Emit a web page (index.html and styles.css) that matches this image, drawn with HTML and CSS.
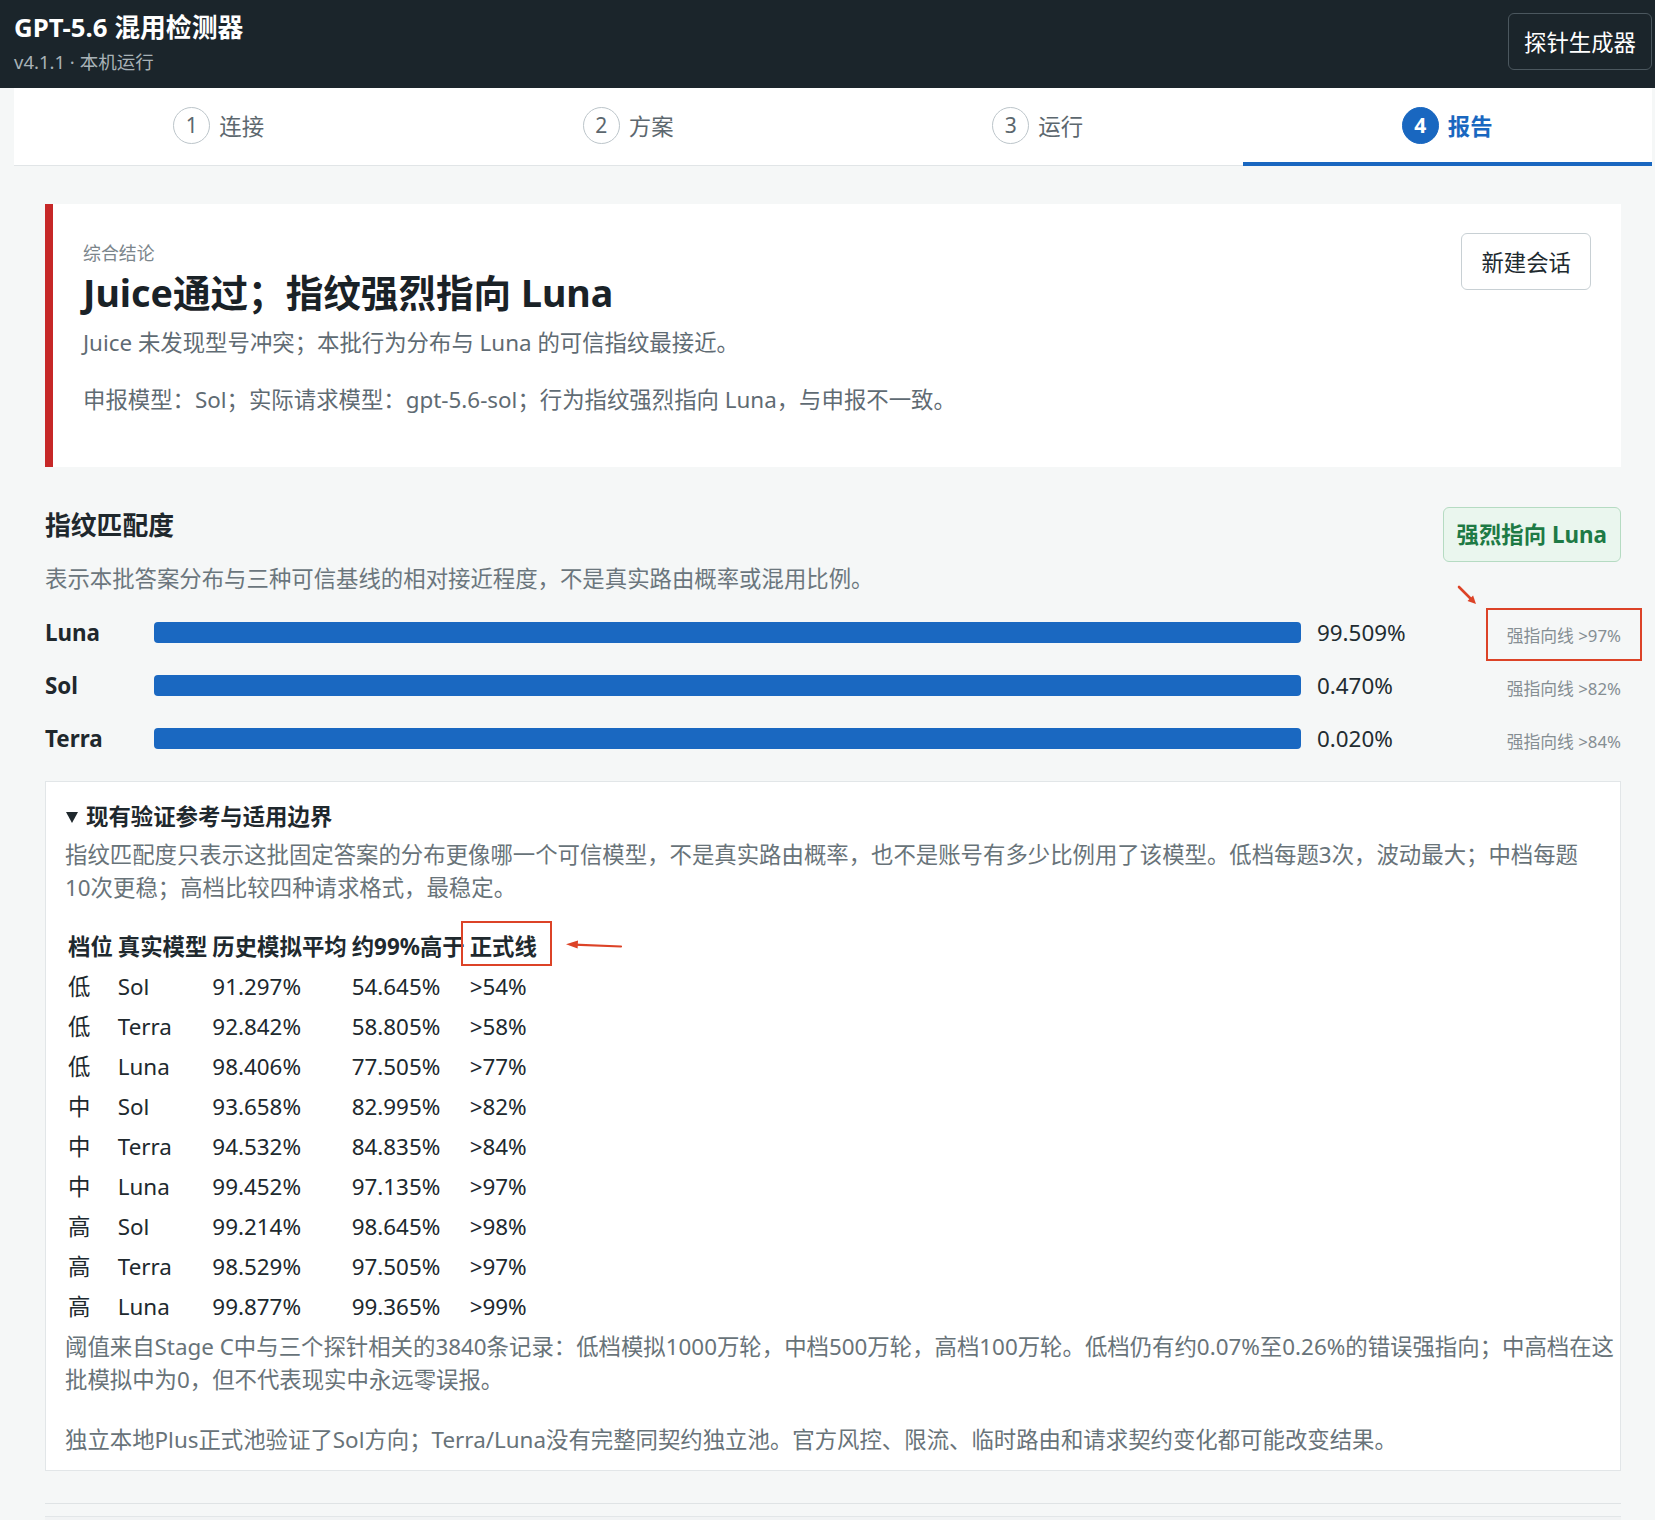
FILE: index.html
```html
<!DOCTYPE html>
<html lang="zh-CN">
<head>
  <meta charset="UTF-8" />
  <meta name="viewport" content="width=device-width, initial-scale=1.0"/>
  <title>GPT-5.6 混用检测器</title>
  <link rel="stylesheet" href="styles.css">
</head>
<body>

  <header class="topbar">
    <div class="brand">
      <div class="brand-title">GPT-5.6 混用检测器</div>
      <div class="brand-sub">v4.1.1 · 本机运行</div>
    </div>
    <button class="probe-btn">探针生成器</button>
  </header>

  <nav class="steps">
    <div class="step"><span class="step-num">1</span>连接</div>
    <div class="step"><span class="step-num">2</span>方案</div>
    <div class="step"><span class="step-num">3</span>运行</div>
    <div class="step active"><span class="step-num">4</span>报告</div>
  </nav>

  <main class="report">
    <section class="verdict">
      <div class="verdict-body">
        <div class="verdict-label">综合结论</div>
        <h1>Juice通过；指纹强烈指向 Luna</h1>
        <p>Juice 未发现型号冲突；本批行为分布与 Luna 的可信指纹最接近。</p>
        <p>申报模型：Sol；实际请求模型：gpt-5.6-sol；行为指纹强烈指向 Luna，与申报不一致。</p>
      </div>
      <button class="new-btn">新建会话</button>
    </section>

    <section class="match">
      <div class="match-head">
        <div>
          <h2>指纹匹配度</h2>
          <p class="match-desc">表示本批答案分布与三种可信基线的相对接近程度，不是真实路由概率或混用比例。</p>
        </div>
        <span class="badge">强烈指向 Luna</span>
      </div>

      <div class="bars">
        <div class="bar-row">
          <span class="bar-name">Luna</span>
          <div class="bar"></div>
          <span class="bar-val">99.509%</span>
          <span class="bar-line">
            <span class="mark">强指向线 &gt;97%
              <i class="anno-box anno-box-line"></i>
              <svg class="anno-arrow anno-arrow-diag" width="24" height="24" viewBox="0 0 24 24">
                <line x1="4" y1="4" x2="16" y2="16" stroke="#dc4327" stroke-width="2.6" stroke-linecap="round"/>
                <polygon points="21,21 18.1,12.5 12.5,18.1" fill="#dc4327"/>
              </svg>
            </span>
          </span>
        </div>
        <div class="bar-row">
          <span class="bar-name">Sol</span>
          <div class="bar"></div>
          <span class="bar-val">0.470%</span>
          <span class="bar-line">强指向线 &gt;82%</span>
        </div>
        <div class="bar-row">
          <span class="bar-name">Terra</span>
          <div class="bar"></div>
          <span class="bar-val">0.020%</span>
          <span class="bar-line">强指向线 &gt;84%</span>
        </div>
      </div>
    </section>

    <details class="refs" open>
      <summary>现有验证参考与适用边界</summary>
      <p class="refs-intro">指纹匹配度只表示这批固定答案的分布更像哪一个可信模型，不是真实路由概率，也不是账号有多少比例用了该模型。低档每题3次，波动最大；中档每题10次更稳；高档比较四种请求格式，最稳定。</p>
      <table class="refs-table">
        <thead>
          <tr>
            <th>档位</th>
            <th>真实模型</th>
            <th>历史模拟平均</th>
            <th>约99%高于</th>
            <th>
              <span class="mark">正式线
                <i class="anno-box anno-box-th"></i>
                <svg class="anno-arrow anno-arrow-left" width="58" height="18" viewBox="0 0 58 18">
                  <line x1="56" y1="10.5" x2="9" y2="8.6" stroke="#dc4327" stroke-width="2.2" stroke-linecap="round"/>
                  <polygon points="1,8.3 13,4.6 12.6,12.4" fill="#dc4327"/>
                </svg>
              </span>
            </th>
          </tr>
        </thead>
        <tbody>
          <tr><td>低</td><td>Sol</td><td>91.297%</td><td>54.645%</td><td>&gt;54%</td></tr>
          <tr><td>低</td><td>Terra</td><td>92.842%</td><td>58.805%</td><td>&gt;58%</td></tr>
          <tr><td>低</td><td>Luna</td><td>98.406%</td><td>77.505%</td><td>&gt;77%</td></tr>
          <tr><td>中</td><td>Sol</td><td>93.658%</td><td>82.995%</td><td>&gt;82%</td></tr>
          <tr><td>中</td><td>Terra</td><td>94.532%</td><td>84.835%</td><td>&gt;84%</td></tr>
          <tr><td>中</td><td>Luna</td><td>99.452%</td><td>97.135%</td><td>&gt;97%</td></tr>
          <tr><td>高</td><td>Sol</td><td>99.214%</td><td>98.645%</td><td>&gt;98%</td></tr>
          <tr><td>高</td><td>Terra</td><td>98.529%</td><td>97.505%</td><td>&gt;97%</td></tr>
          <tr><td>高</td><td>Luna</td><td>99.877%</td><td>99.365%</td><td>&gt;99%</td></tr>
        </tbody>
      </table>
      <p class="refs-note">阈值来自Stage C中与三个探针相关的3840条记录：低档模拟1000万轮，中档500万轮，高档100万轮。低档仍有约0.07%至0.26%的错误强指向；中高档在这批模拟中为0，但不代表现实中永远零误报。</p>
      <p class="refs-last">独立本地Plus正式池验证了Sol方向；Terra/Luna没有完整同契约独立池。官方风控、限流、临时路由和请求契约变化都可能改变结果。</p>
    </details>

    <hr class="divider">
    <div class="next-block"></div>
  </main>

</body>
</html>
```

FILE: styles.css
```css
* {
  box-sizing: border-box;
}

body {
  margin: 0;
  font-family: "Noto Sans", "Noto Sans CJK SC", sans-serif;
  font-size: 22.4px;
  color: #1f282d;
  background: #f5f7f7;
}

/* top bar */
.topbar {
  height: 88px;
  background: #1b252b;
  display: flex;
  justify-content: space-between;
  align-items: flex-start;
  padding: 10px 3px 0 14px;
}

.brand-title {
  color: #fff;
  font-size: 25.8px;
  font-weight: bold;
  line-height: 34px;
}

.brand-sub {
  color: #a8b2b7;
  font-size: 18.5px;
  line-height: 26px;
  margin-top: 5px;
}

.probe-btn {
  margin-top: 3px;
  height: 57px;
  padding: 0 15px;
  background: transparent;
  color: #fff;
  border: 1px solid #4b575e;
  border-radius: 6px;
  font-family: inherit;
  font-size: 22.4px;
}

/* steps */
.steps {
  display: grid;
  grid-template-columns: repeat(4, 1fr);
  margin: 0 3px 0 14px;
  background: #fff;
  border-bottom: 1px solid #e1e5e7;
}

.step {
  height: 78px;
  margin-bottom: -1px;
  display: flex;
  align-items: center;
  justify-content: center;
  gap: 9px;
  color: #5c676e;
  border-bottom: 4px solid transparent;
}

.step-num {
  width: 37px;
  height: 37px;
  border: 1.5px solid #bcc5ca;
  border-radius: 50%;
  display: flex;
  align-items: center;
  justify-content: center;
  font-size: 21px;
  color: #5c676e;
}

.step.active {
  color: #1967c0;
  font-weight: bold;
  border-bottom-color: #1967c0;
}

.step.active .step-num {
  background: #1967c0;
  border-color: #1967c0;
  color: #fff;
}

/* report */
.report {
  padding: 38px 34px 0 45px;
}

.verdict {
  display: flex;
  justify-content: space-between;
  align-items: flex-start;
  background: #fff;
  border-left: 8px solid #c62828;
  padding: 29px 30px 28px 30px;
}

.verdict-label {
  margin-top: 8px;
  font-size: 17.9px;
  line-height: 24px;
  color: #7b858b;
}

.verdict h1 {
  margin: 6px 0 0;
  font-size: 37.6px;
  line-height: 44px;
  color: #1a2227;
}

.verdict p {
  margin: 11px 0 0;
  line-height: 33px;
  color: #5f6b73;
}

.verdict p + p {
  margin: 24px 0 23px;
}

.new-btn {
  height: 57px;
  padding: 0 19px;
  background: #fff;
  color: #20292e;
  border: 1px solid #c8d0d4;
  border-radius: 6px;
  font-family: inherit;
  font-size: 22.4px;
}

/* match */
.match {
  margin-top: 40px;
}

.match-head {
  display: flex;
  justify-content: space-between;
  align-items: flex-start;
}

.match h2 {
  margin: 2px 0 0;
  font-size: 25.8px;
  line-height: 32px;
}

.match-desc {
  margin: 21px 0 0;
  line-height: 33px;
  color: #6b767d;
}

.badge {
  padding: 10px 13px;
  line-height: 33px;
  background: #eaf6ee;
  border: 1px solid #b5dbc2;
  border-radius: 6px;
  color: #1e7a45;
  font-weight: bold;
}

.bars {
  margin-top: 11px;
}

.bar-row {
  display: grid;
  grid-template-columns: 109px 1fr 166px 154px;
  align-items: center;
  height: 53px;
}

.bar-name {
  font-weight: bold;
}

.bar {
  height: 21px;
  background: #1a68c1;
  border-radius: 4px;
}

.bar-val {
  padding-left: 16px;
  color: #222c31;
}

.bar-line {
  padding-top: 6px;
  text-align: right;
  font-size: 16.8px;
  line-height: 24px;
  color: #858e93;
}

/* annotations */
.mark {
  position: relative;
  display: inline-block;
}

.anno-box {
  position: absolute;
  border: 2px solid #dc4327;
}

.anno-box-line {
  left: -21px;
  top: -16px;
  width: 156px;
  height: 53px;
}

.anno-box-th {
  left: -9px;
  top: -9px;
  width: 91px;
  height: 45px;
}

.anno-arrow {
  position: absolute;
}

.anno-arrow-diag {
  left: -52px;
  top: -41px;
}

.anno-arrow-left {
  left: 95px;
  top: 6px;
}

/* references */
.refs {
  margin-top: 16px;
  background: #fff;
  border: 1px solid #e2e6e8;
  padding: 18px 20px 14px 19px;
}

.refs summary {
  list-style: none;
  font-weight: bold;
  line-height: 33px;
  color: #1f282d;
}

.refs summary::-webkit-details-marker {
  display: none;
}

.refs summary::before {
  content: "";
  display: inline-block;
  margin: 0 8px 2px 1px;
  border-left: 6px solid transparent;
  border-right: 6px solid transparent;
  border-top: 11px solid #1f282d;
  vertical-align: middle;
}

.refs p {
  margin: 0;
  line-height: 33px;
  color: #687379;
}

.refs-intro {
  margin: 5px 0 22px !important;
}

.refs-note {
  margin: 2px -18px 0 0 !important;
}

.refs-last {
  margin-top: 27px !important;
}

.refs-table {
  color: #20292e;
}

.refs-table th {
  text-align: left;
  line-height: 34px;
  padding: 2px 2px 2px 1px;
}

.refs-table td {
  line-height: 34px;
  padding: 2px 2px 2px 1px;
}

.divider {
  margin: 32px 0 0;
  border: 0;
  border-top: 1px solid #dfe3e5;
}

.next-block {
  margin-top: 12px;
  height: 20px;
  border-top: 1px solid #e2e6e8;
  background: #f1f3f4;
}
```
